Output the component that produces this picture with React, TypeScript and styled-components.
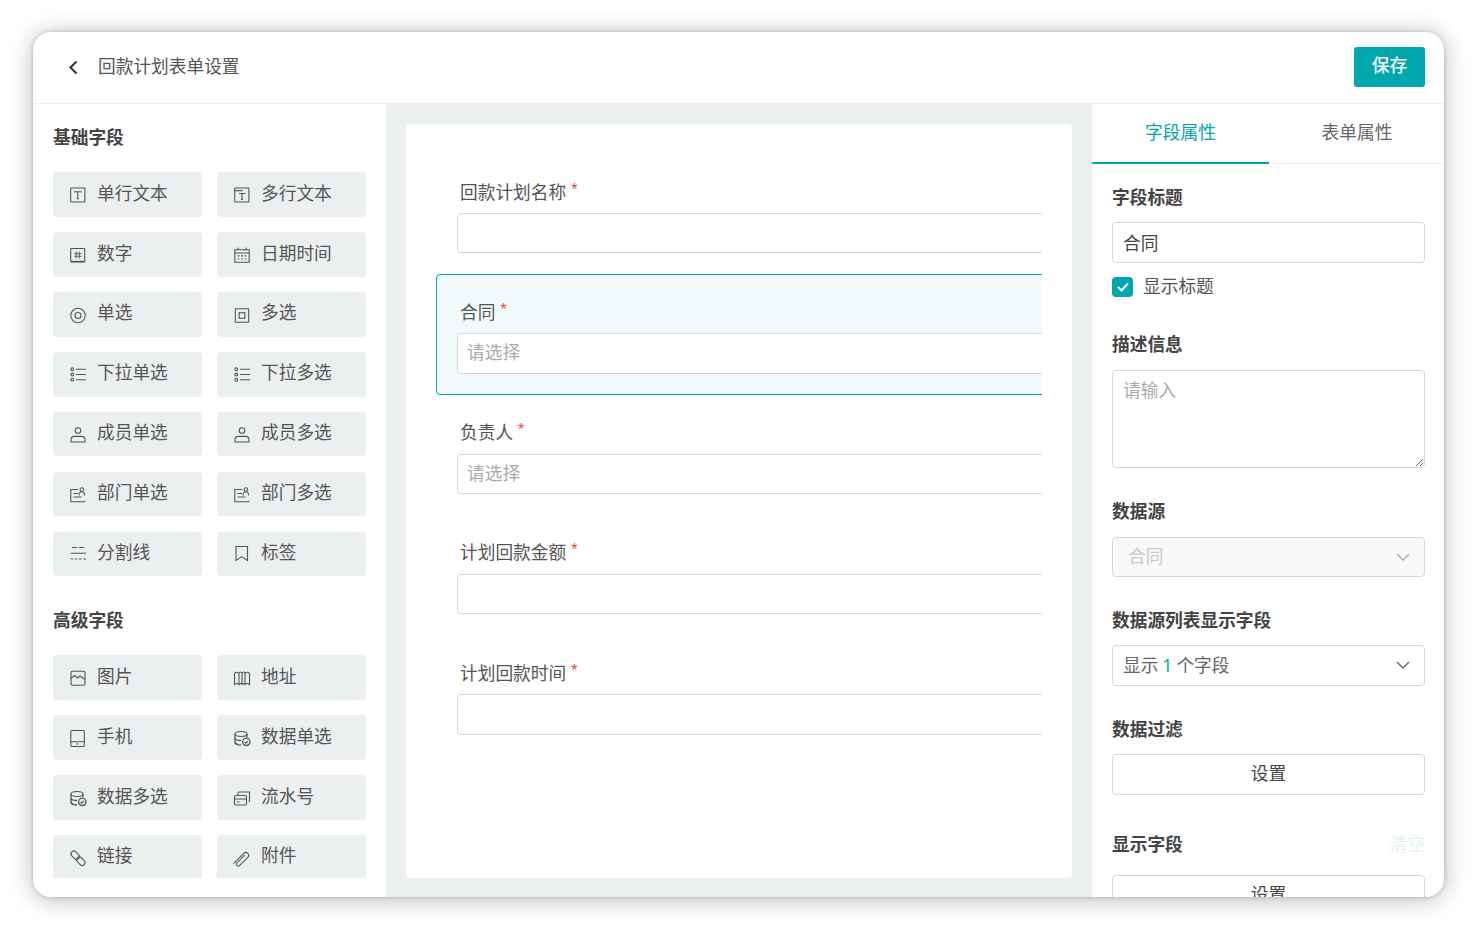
import React from "react";
import styled, { createGlobalStyle } from "styled-components";

const Global = createGlobalStyle`
  html, body { margin: 0; padding: 0; background: #fff; }
  * { box-sizing: border-box; }
  body { font-family: "Noto Sans CJK SC", "Noto Sans", sans-serif; color: #444; }
`;

const Page = styled.div`
  width: 1476px;
  height: 930px;
  padding: 32px 32px 33px 33px;
  overflow: hidden;
`;
const Win = styled.div`
  height: 865px;
  background: #fff;
  border-radius: 18px;
  box-shadow: 0 2px 24px rgba(0, 0, 0, 0.28), 0 0 4px rgba(0, 0, 0, 0.18);
  overflow: hidden;
  display: flex;
  flex-direction: column;
`;
const Header = styled.header`
  flex: none;
  height: 72px;
  border-bottom: 1px solid #ebeff0;
  display: flex;
  align-items: center;
  padding: 0 19px 2px 30px;
`;
const Back = styled.span`
  display: flex;
  width: 20px;
  margin-right: 15px;
  color: #333;
`;
const Title = styled.h1`
  margin: 0 0 4px;
  flex: 1;
  font-size: 17.7px;
  font-weight: 400;
  line-height: 26px;
  color: #555;
`;
const Save = styled.button`
  width: 71px;
  height: 40px;
  border: 0;
  border-radius: 3px;
  background: #00a7ad;
  color: #fff;
  font: 500 17.7px/26px "Noto Sans CJK SC", sans-serif;
  padding: 0 0 5px;
`;
const Body = styled.div`
  flex: 1;
  min-height: 0;
  display: flex;
`;
const Sidebar = styled.aside`
  flex: none;
  width: 353px;
  padding: 0 20px 19px;
  display: flex;
`;
const SideScroll = styled.div`
  flex: 1;
  overflow: hidden;
  padding-top: 20px;
`;
const GroupTitle = styled.h2<{ $top?: number }>`
  margin: ${(p) => p.$top ?? 0}px 0 24.3px;
  font-size: 17.7px;
  font-weight: 700;
  line-height: 24px;
  color: #444;
`;
const Grid = styled.div`
  display: grid;
  grid-template-columns: 149px 149px;
  column-gap: 15px;
  row-gap: 15.3px;
`;
const Tile = styled.div`
  height: 44.6px;
  background: #ebeff0;
  border-radius: 4px;
  display: flex;
  align-items: center;
  padding-left: 16px;
  gap: 10px;
  font-size: 17.7px;
  color: #555;
  & > span { line-height: 26px; margin-top: -5.8px; }
  & > svg { flex: none; margin-top: 1px; }
`;
const Middle = styled.main`
  flex: none;
  width: 706px;
  background: #ebeff0;
  padding: 20px 20px 19px;
  display: flex;
`;
const Canvas = styled.div`
  flex: 1;
  min-width: 0;
  background: #fff;
  border-radius: 4px;
  padding: 30px;
  display: flex;
`;
const CanvasScroll = styled.div`
  flex: 1;
  min-width: 0;
  overflow: hidden;
`;
const Block = styled.div<{ $active?: boolean }>`
  width: 680px;
  height: 120.3px;
  padding: 24.5px 20px 0;
  border: 1px solid ${(p) => (p.$active ? "#00a7ad" : "transparent")};
  border-radius: 4px;
  background: ${(p) => (p.$active ? "#f1f9fb" : "transparent")};
`;
const FieldLabel = styled.div`
  font-size: 17.7px;
  line-height: 23.6px;
  color: #555;
  padding-left: 3px;
  margin-bottom: 9.9px;
`;
const Star = styled.span`
  color: #f04134;
  font: 16px/16px "Liberation Sans", sans-serif;
  margin-left: 5px;
  position: relative;
  top: -4px;
`;
const TextInput = styled.input`
  display: block;
  width: 100%;
  height: 40.5px;
  border: 1px solid #d4d7d9;
  border-radius: 4px;
  background: #fff;
  padding: 0 10px 2px;
  font: 400 17.7px "Noto Sans CJK SC", sans-serif;
  color: #444;
  outline: none;
  &::placeholder { color: #aaa; opacity: 1; }
`;
const FieldInput = styled(TextInput)`
  height: 40.4px;
  padding: 0 9px 4px;
`;
const Props = styled.aside`
  flex: 1;
  min-width: 0;
  display: flex;
  flex-direction: column;
`;
const Tabs = styled.div`
  flex: none;
  display: flex;
  height: 60px;
  border-bottom: 1px solid #ebeff0;
`;
const Tab = styled.div<{ $on?: boolean }>`
  flex: ${(p) => (p.$on ? "none" : "1")};
  width: ${(p) => (p.$on ? "177px" : "auto")};
  height: 60px;
  padding: 0 0 4px ${(p) => (p.$on ? 0 : 1)}px;
  display: flex;
  align-items: center;
  justify-content: center;
  font-size: 17.7px;
  color: ${(p) => (p.$on ? "#00a7ad" : "#666")};
  border-bottom: 2px solid ${(p) => (p.$on ? "#00a7ad" : "transparent")};
`;
const PropsBody = styled.div`
  padding: 19.8px 19px 0 20px;
`;
const Section = styled.section<{ $after?: number }>`
  margin-bottom: ${(p) => p.$after ?? 30}px;
`;
const SectionHead = styled.div<{ $gap?: number }>`
  display: flex;
  justify-content: space-between;
  height: 26px;
  margin-bottom: ${(p) => p.$gap ?? 12.5}px;
  font-size: 17.7px;
  line-height: 24px;
`;
const SectionLabel = styled.h3`
  margin: 0;
  font-size: 17.7px;
  line-height: 24px;
  font-weight: 700;
  color: #444;
`;
const Clear = styled.span`
  color: #dff3f4;
  font-size: 17.7px;
`;
const CheckRow = styled.label`
  display: flex;
  align-items: center;
  gap: 10px;
  height: 20px;
  margin-top: 14px;
  font-size: 17.7px;
  color: #555;
  & > span { line-height: 26px; margin-top: -3px; }
`;
const Check = styled.span`
  width: 21px;
  height: 20px;
  margin-top: 0 !important;
  border-radius: 4px;
  background: #00a7ad;
  display: flex;
  align-items: center;
  justify-content: center;
`;
const Area = styled.textarea`
  display: block;
  width: 100%;
  height: 98.5px;
  border: 1px solid #d4d7d9;
  border-radius: 4px;
  padding: 5px 10px;
  font: 400 17.7px/26px "Noto Sans CJK SC", sans-serif;
  outline: none;
  &::placeholder { color: #aaa; opacity: 1; }
`;
const Select = styled.div<{ $disabled?: boolean }>`
  height: 40.5px;
  border: 1px solid #d4d7d9;
  border-radius: 4px;
  background: ${(p) => (p.$disabled ? "#f8f9fa" : "#fff")};
  color: ${(p) => (p.$disabled ? "#c8c8c8" : "#666")};
  display: flex;
  align-items: center;
  justify-content: space-between;
  padding: 0 14px 0 ${(p) => (p.$disabled ? 15 : 10)}px;
  font-size: 17.7px;
  & > span { margin-top: -3px; }
`;
const Num = styled.b`
  font-family: "Noto Sans", sans-serif;
  font-weight: 400;
  color: #00a7ad;
`;
const Outline = styled.button`
  display: block;
  width: 100%;
  height: 40.5px;
  border: 1px solid #d4d7d9;
  border-radius: 4px;
  background: #fff;
  color: #444;
  padding: 0 0 4px;
  font: 400 17.7px/26px "Noto Sans CJK SC", sans-serif;
`;

const Ic = ({ children }: { children: React.ReactNode }) => (
  <svg width="18" height="18" viewBox="0 0 18 18" fill="none" stroke="#555" strokeWidth="1.1">
    {children}
  </svg>
);

const icons: Record<string, React.ReactNode> = {
  text: (<Ic><rect x="1.7" y="2" width="14.2" height="14" rx="0.5" /><path d="M5.500 6.500v-.8h6.500v.8M8.800 5.700v7M7.500 12.700h2.600" /></Ic>),
  multi: (<Ic><rect x="1.700" y="2" width="14.200" height="14" rx="0.5" /><path d="M1.700 4.600h8M6 7.500h6v.6M9 7.500v6M8 13.500h2" /></Ic>),
  number: (<Ic><rect x="1.700" y="2.500" width="14" height="13.500" rx="0.5" /><path d="M2 15.500h13.500" strokeWidth="1.300" /><path d="M7.200 5.500v7M10.300 5.500v7M5.200 7.700h7.400M5.200 10.300h7.400" strokeWidth="0.900" /></Ic>),
  date: (<Ic><path d="M1.800 3.700h14.400v12.500H1.800zM5 1.500v2.500M13 1.500v2.500M1.800 7h14.400M4.500 9.900h2M8 9.900h2M11.500 9.900h2M4.500 13h2M8 13h2M11.500 13h2" /></Ic>),
  radio: (<Ic><circle cx="9" cy="9.500" r="7.200" /><circle cx="9" cy="9.500" r="3" /></Ic>),
  check: (<Ic><rect x="2.300" y="2.800" width="13.400" height="13.400" rx="0.5" /><rect x="6.200" y="6.700" width="5.600" height="5.600" /></Ic>),
  list: (<Ic><circle cx="3.300" cy="3.300" r="1.400" /><circle cx="3.300" cy="8.500" r="1.400" /><circle cx="3.300" cy="13.700" r="1.400" /><path d="M7 3.300h10M7 8.500h10M7 13.700h10" /></Ic>),
  user: (<Ic><circle cx="9" cy="4.500" r="2.800" /><path d="M2 16v-2.200c0-2 1.600-3.400 3.500-3.400h7c1.900 0 3.500 1.400 3.500 3.400V16z" /></Ic>),
  dept: (<Ic><path d="M9 3.500H1.800v12.200h13c.6 0 1.200-.4 1.200-1M4.500 7.500h4.500M4.500 11h8" /><circle cx="12.800" cy="3.500" r="1.800" /><path d="M10 9.500c0-2.500 1.200-3.800 2.800-3.800s2.800 1.300 2.800 3.800" /></Ic>),
  divider: (<Ic><path d="M3 2.500h5M10 2.500h5M1.700 8.300h15.300" /><path d="M1.700 14h2.500M5.800 14h2.500M10 14h2.500M14.500 14h2.500" /></Ic>),
  tag: (<Ic><path d="M3 1.500h11.500v14L8.800 11.600 3 15.500z" /></Ic>),
  image: (<Ic><rect x="2" y="2.300" width="14" height="14" rx="1.500" /><path d="M2 9.500l3.500-3 3 2.500 2.500-2 5 3.500" /></Ic>),
  map: (<Ic><path d="M1.500 4.500c1.500-1.600 3-1.600 4.500 0v11c-1.500-1.300-3-1.300-4.500 0zM16.500 4.500c-1.500-1.600-3-1.600-4.500 0v11c1.500-1.300 3-1.300 4.500 0zM6 4.500c1-2 2-2 3 0 1-2 2-2 3 0M9 4.500v11M6 15.500c1-1.300 2-1.300 3 0 1-1.300 2-1.300 3 0" /></Ic>),
  phone: (<Ic><rect x="1.800" y="1.500" width="13.500" height="16" rx="1" /><path d="M1.800 12.700h13.500M7.500 15h2" /></Ic>),
  data: (<Ic><ellipse cx="8" cy="5" rx="6" ry="2.500" /><path d="M2 5v8.500c0 1.400 2.700 2.500 6 2.500M2 9c0 1.400 2.700 2.500 6 2.500M2 13c0 .8 1 1.500 2.500 2M14 5v3" strokeWidth="1.300" /><circle cx="13.300" cy="12.800" r="3.700" fill="#ebeff0" strokeWidth="1.300" /><path d="M11.500 12.800l1.400 1.400 2.100-2.300" /></Ic>),
  serial: (<Ic><path d="M5 6V4.500C5 3.700 5.500 3 6.500 3h10v8.500c0 .8-.5 1.300-1 1.300" /><rect x="1.500" y="6.500" width="12" height="9.500" rx="1.200" /><path d="M1.500 10h12M4 13h2.500" /></Ic>),
  link: (<Ic><rect x="1.400" y="3.400" width="9.600" height="5.600" rx="2.800" transform="rotate(45 6.200 6.200)" /><rect x="7" y="9.400" width="9.600" height="5.600" rx="2.800" transform="rotate(45 11.800 12.200)" /></Ic>),
  clip: (<Ic><g transform="rotate(-45 9 9)"><path d="M-1 7h14.500a2.800 2.800 0 010 5.600H1.500a1.900 1.900 0 010-3.700H13" /></g></Ic>),
};

const basic: [string, string][] = [
  ["text", "单行文本"], ["multi", "多行文本"],
  ["number", "数字"], ["date", "日期时间"],
  ["radio", "单选"], ["check", "多选"],
  ["list", "下拉单选"], ["list", "下拉多选"],
  ["user", "成员单选"], ["user", "成员多选"],
  ["dept", "部门单选"], ["dept", "部门多选"],
  ["divider", "分割线"], ["tag", "标签"],
];
const advanced: [string, string][] = [
  ["image", "图片"], ["map", "地址"],
  ["phone", "手机"], ["data", "数据单选"],
  ["data", "数据多选"], ["serial", "流水号"],
  ["link", "链接"], ["clip", "附件"],
];

const fields: { label: string; placeholder?: string; active?: boolean }[] = [
  { label: "回款计划名称" },
  { label: "合同", placeholder: "请选择", active: true },
  { label: "负责人", placeholder: "请选择" },
  { label: "计划回款金额" },
  { label: "计划回款时间" },
];

const Chevron = ({ color }: { color: string }) => (
  <svg width="14" height="8" viewBox="0 0 14 8" fill="none" stroke={color} strokeWidth="1.400">
    <path d="M1 1l6 6 6-6" />
  </svg>
);

const Tiles = ({ items }: { items: [string, string][] }) => (
  <Grid>
    {items.map(([icon, label]) => (
      <Tile key={label}>
        {icons[icon]}
        <span>{label}</span>
      </Tile>
    ))}
  </Grid>
);

export default function App() {
  return (
    <Page>
      <Global />
      <Win>
        <Header>
          <Back>
            <svg width="20" height="20" viewBox="0 0 20 20" fill="none" stroke="#333" strokeWidth="2">
              <path d="M13.500 4.500L7.500 10.500l6 6" />
            </svg>
          </Back>
          <Title>回款计划表单设置</Title>
          <Save>保存</Save>
        </Header>
        <Body>
          <Sidebar>
            <SideScroll>
              <GroupTitle>基础字段</GroupTitle>
              <Tiles items={basic} />
              <GroupTitle $top={30.8}>高级字段</GroupTitle>
              <Tiles items={advanced} />
            </SideScroll>
          </Sidebar>
          <Middle>
            <Canvas>
              <CanvasScroll>
                {fields.map((f) => (
                  <Block key={f.label} $active={f.active}>
                    <FieldLabel>
                      {f.label}
                      <Star>*</Star>
                    </FieldLabel>
                    <FieldInput readOnly placeholder={f.placeholder} />
                  </Block>
                ))}
              </CanvasScroll>
            </Canvas>
          </Middle>
          <Props>
            <Tabs>
              <Tab $on>字段属性</Tab>
              <Tab>表单属性</Tab>
            </Tabs>
            <PropsBody>
              <Section $after={34.3}>
                <SectionHead><SectionLabel>字段标题</SectionLabel></SectionHead>
                <TextInput readOnly value="合同" />
                <CheckRow>
                  <Check>
                    <svg width="14" height="12" viewBox="0 0 14 12" fill="none" stroke="#fff" strokeWidth="2">
                      <path d="M2 6l3.500 3.500L12 2.500" />
                    </svg>
                  </Check>
                  <span>显示标题</span>
                </CheckRow>
              </Section>
              <Section>
                <SectionHead><SectionLabel>描述信息</SectionLabel></SectionHead>
                <Area readOnly placeholder="请输入" />
              </Section>
              <Section $after={29.6}>
                <SectionHead><SectionLabel>数据源</SectionLabel></SectionHead>
                <Select $disabled>
                  <span>合同</span>
                  <Chevron color="#aaa" />
                </Select>
              </Section>
              <Section>
                <SectionHead><SectionLabel>数据源列表显示字段</SectionLabel></SectionHead>
                <Select>
                  <span>显示 <Num>1</Num> 个字段</span>
                  <Chevron color="#666" />
                </Select>
              </Section>
              <Section $after={36}>
                <SectionHead><SectionLabel>数据过滤</SectionLabel></SectionHead>
                <Outline>设置</Outline>
              </Section>
              <Section>
                <SectionHead $gap={18}>
                  <SectionLabel>显示字段</SectionLabel>
                  <Clear>清空</Clear>
                </SectionHead>
                <Outline>设置</Outline>
              </Section>
            </PropsBody>
          </Props>
        </Body>
      </Win>
    </Page>
  );
}
